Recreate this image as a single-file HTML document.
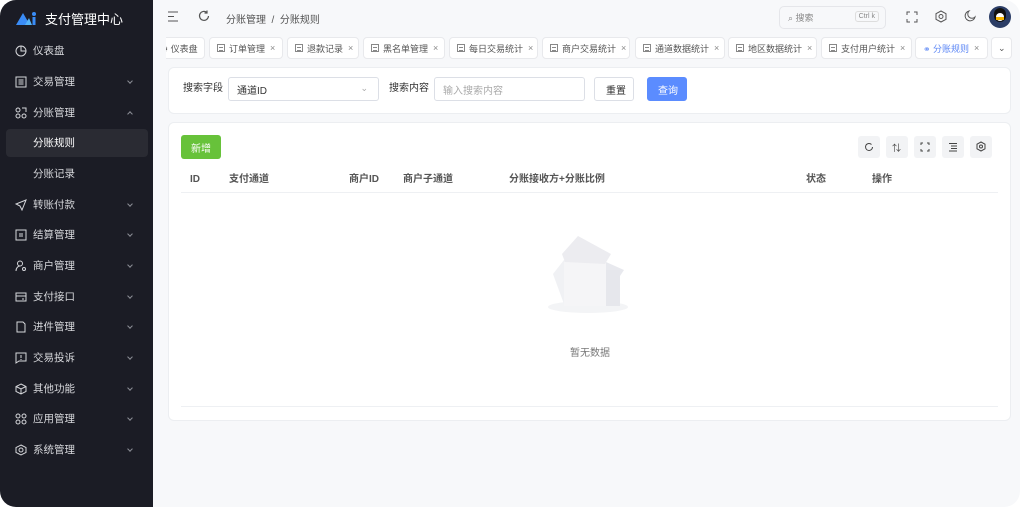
<!DOCTYPE html>
<html><head><meta charset="utf-8"><style>
*{margin:0;padding:0;box-sizing:border-box}
body{width:1024px;height:509px;background:#fff;font-family:"Liberation Sans","Noto Sans CJK SC",sans-serif;position:relative;overflow:hidden}
#frame{position:absolute;left:0;top:0;width:1020px;height:507px;border-radius:16px;overflow:hidden;background:#f7f8fa}
#side{position:absolute;left:0;top:0;width:153px;height:507px;background:#1b1c25}
.logo{position:absolute;left:16px;top:8px;height:20px;display:flex;align-items:center;color:#fff;font-size:13px}
.mi{position:absolute;left:0;width:153px;height:30px;display:flex;align-items:center;color:#d6d7db;font-size:10.5px;line-height:12px}
.mi svg{position:absolute;left:15px}
.mi span{position:absolute;left:33px;top:9px}
.mi .ar{position:absolute;left:128px;top:12px;width:4px;height:4px;border-right:1px solid #8b8d95;border-bottom:1px solid #8b8d95;transform:rotate(45deg)}
.mi .up{transform:rotate(-135deg);top:14px}
.act{background:#2a2b33;left:6px;width:142px;border-radius:4px}
.act span{left:27px;top:8px;color:#fff}
.top{position:absolute;left:153px;top:0;right:0;height:34px;color:#555;font-size:10px}
.tab{position:absolute;top:37px;height:22px;background:#fff;border:1px solid #e8e9ec;border-radius:4px;font-size:9px;color:#555;display:flex;align-items:center;padding-left:7px;white-space:nowrap}
.tab i{display:inline-block;width:8px;height:8px;border:1px solid #888;margin-right:4px;position:relative}
.tab i:after{content:"";position:absolute;left:1px;top:2px;width:4px;height:2px;border-top:1px solid #888;border-bottom:1px solid #888}
.tab b{font-weight:normal;color:#888;margin-left:5px}
.card{position:absolute;background:#fff;border:1px solid #eceef1;border-radius:6px}
.lbl{position:absolute;font-size:10px;color:#333;line-height:12px}
.inp{position:absolute;border:1px solid #dcdfe6;border-radius:3px;height:24px;font-size:10px;display:flex;align-items:center;padding-left:8px}
.tb{position:absolute;top:136px;width:22px;height:22px;background:#f2f3f5;border-radius:3px}
.th{position:absolute;top:174px;font-size:10px;line-height:12px;color:#555;font-weight:bold}
</style></head><body>
<div id="frame">
<div id="side">
 <div class="logo"><svg width="22" height="16" viewBox="0 0 22 16"><path d="M0 15L7 3l7 12z" fill="#3a8cf6"/><path d="M9 15l4-7 3 7z" fill="#56b4f7"/><circle cx="18" cy="4" r="2" fill="#3a8cf6"/><rect x="16.5" y="7" width="3" height="8" fill="#3a8cf6"/></svg><span style="margin-left:7px">支付管理中心</span></div>
 <div class="mi" style="top:36px"><svg width="12" height="12" viewBox="0 0 12 12" fill="none" stroke="#d6d7db"><circle cx="6" cy="6" r="5"/><path d="M6 1v5h5"/></svg><span>仪表盘</span></div>
 <div class="mi" style="top:67px"><svg width="12" height="12" viewBox="0 0 12 12" fill="none" stroke="#d6d7db"><rect x="1" y="1" width="10" height="10"/><path d="M3.5 4h5M3.5 6h5M3.5 8h5"/></svg><span>交易管理</span><i class="ar"></i></div>
 <div class="mi" style="top:98px"><svg width="12" height="12" viewBox="0 0 12 12" fill="none" stroke="#d6d7db"><circle cx="3" cy="3" r="2"/><circle cx="3" cy="9" r="2"/><circle cx="9" cy="9" r="2"/><path d="M7 1h4v4"/></svg><span>分账管理</span><i class="ar up"></i></div>
 <div class="mi act" style="top:129px;height:28px"><span>分账规则</span></div>
 <div class="mi" style="top:159px"><span>分账记录</span></div>
 <div class="mi" style="top:190px"><svg width="12" height="12" viewBox="0 0 12 12" fill="none" stroke="#d6d7db"><path d="M11 1L1 5l4 2 2 4z"/></svg><span>转账付款</span><i class="ar"></i></div>
 <div class="mi" style="top:220px"><svg width="12" height="12" viewBox="0 0 12 12" fill="none" stroke="#d6d7db"><rect x="1" y="1" width="10" height="10"/><path d="M4 5h4M4 7h4"/></svg><span>结算管理</span><i class="ar"></i></div>
 <div class="mi" style="top:251px"><svg width="12" height="12" viewBox="0 0 12 12" fill="none" stroke="#d6d7db"><circle cx="5" cy="3.5" r="2.5"/><path d="M1 11c0-3 2-5 4-5"/><circle cx="9" cy="9" r="1.5"/></svg><span>商户管理</span><i class="ar"></i></div>
 <div class="mi" style="top:282px"><svg width="12" height="12" viewBox="0 0 12 12" fill="none" stroke="#d6d7db"><rect x="1" y="2" width="10" height="8"/><path d="M1 5h10M7 8h2"/></svg><span>支付接口</span><i class="ar"></i></div>
 <div class="mi" style="top:312px"><svg width="12" height="12" viewBox="0 0 12 12" fill="none" stroke="#d6d7db"><path d="M2 1h6l2 2v8H2z"/></svg><span>进件管理</span><i class="ar"></i></div>
 <div class="mi" style="top:343px"><svg width="12" height="12" viewBox="0 0 12 12" fill="none" stroke="#d6d7db"><path d="M1 1h10v8H4l-3 2z"/><path d="M6 3v3M6 7v1"/></svg><span>交易投诉</span><i class="ar"></i></div>
 <div class="mi" style="top:374px"><svg width="12" height="12" viewBox="0 0 12 12" fill="none" stroke="#d6d7db"><path d="M6 1l5 2.5v5L6 11 1 8.5v-5z"/><path d="M1 3.5L6 6l5-2.5M6 6v5"/></svg><span>其他功能</span><i class="ar"></i></div>
 <div class="mi" style="top:404px"><svg width="12" height="12" viewBox="0 0 12 12" fill="none" stroke="#d6d7db"><circle cx="3" cy="3" r="2"/><circle cx="9" cy="3" r="2"/><circle cx="3" cy="9" r="2"/><circle cx="9" cy="9" r="2"/></svg><span>应用管理</span><i class="ar"></i></div>
 <div class="mi" style="top:435px"><svg width="12" height="12" viewBox="0 0 12 12" fill="none" stroke="#d6d7db"><path d="M6 1l5 2.5v5L6 11 1 8.5v-5z"/><circle cx="6" cy="6" r="2"/></svg><span>系统管理</span><i class="ar"></i></div>
</div>
<div class="top">
 <svg style="position:absolute;left:14px;top:11px" width="12" height="11" viewBox="0 0 12 11" fill="none" stroke="#555"><path d="M1 1h10M1 5.5h6M1 10h10"/></svg>
 <svg style="position:absolute;left:45px;top:10px" width="12" height="12" viewBox="0 0 12 12" fill="none" stroke="#555" stroke-width="1.2"><path d="M10.5 6A4.5 4.5 0 1 1 9 2.5M9 0.5v2.5H6.5"/></svg>
 <span style="position:absolute;left:73px;top:11px">分账管理 &nbsp;/&nbsp; 分账规则</span>
 <div style="position:absolute;left:626px;top:6px;width:107px;height:23px;border:1px solid #e5e6ea;border-radius:5px;background:#f7f8fa;font-size:9px;color:#888;display:flex;align-items:center;padding-left:8px">⌕ 搜索<span style="position:absolute;right:6px;top:4px;border:1px solid #ddd;border-radius:3px;font-size:7px;padding:1px 3px">Ctrl k</span></div>
 <svg style="position:absolute;left:753px;top:11px" width="12" height="12" viewBox="0 0 12 12" fill="none" stroke="#555"><path d="M1 4V1h3M8 1h3v3M11 8v3H8M4 11H1V8"/></svg>
 <svg style="position:absolute;left:782px;top:10px" width="12" height="13" viewBox="0 0 12 13" fill="none" stroke="#555"><path d="M6 1l5 2.7v5.6L6 12 1 9.3V3.7z"/><circle cx="6" cy="6.5" r="2"/></svg>
 <svg style="position:absolute;left:811px;top:10px" width="12" height="12" viewBox="0 0 12 12" fill="none" stroke="#555"><path d="M5 1a5 5 0 1 0 6 6A4 4 0 0 1 5 1z"/></svg>
 <div style="position:absolute;left:836px;top:6px;width:22px;height:22px;border-radius:50%;background:#2b3d66;overflow:hidden"><div style="position:absolute;left:5px;top:2px;width:12px;height:14px;background:#111;border-radius:6px"></div><div style="position:absolute;left:7px;top:7px;width:8px;height:8px;background:#fff;border-radius:4px"></div><div style="position:absolute;left:7px;top:11px;width:8px;height:3px;background:#f5b400"></div></div>
</div>
<div style="position:absolute;left:166px;top:37px;width:40px;height:22px;overflow:hidden"><div class="tab" style="left:-14px;top:0;width:53px">⚙ 仪表盘</div></div>
<div class="tab" style="left:209px;width:74px"><i></i>订单管理<b>×</b></div>
<div class="tab" style="left:287px;width:72px"><i></i>退款记录<b>×</b></div>
<div class="tab" style="left:363px;width:82px"><i></i>黑名单管理<b>×</b></div>
<div class="tab" style="left:449px;width:89px"><i></i>每日交易统计<b>×</b></div>
<div class="tab" style="left:542px;width:88px"><i></i>商户交易统计<b>×</b></div>
<div class="tab" style="left:635px;width:90px"><i></i>通道数据统计<b>×</b></div>
<div class="tab" style="left:728px;width:89px"><i></i>地区数据统计<b>×</b></div>
<div class="tab" style="left:821px;width:91px"><i></i>支付用户统计<b>×</b></div>
<div class="tab" style="left:915px;width:73px;color:#5b86f5">⚭ 分账规则<b>×</b></div>
<div class="tab" style="left:991px;width:21px;padding-left:6px;color:#555">⌄</div>
<div class="card" style="left:168px;top:67px;width:843px;height:47px"></div>
<div class="lbl" style="left:183px;top:83px">搜索字段</div>
<div class="inp" style="left:228px;top:77px;width:151px;color:#333">通道ID<span style="position:absolute;right:10px;top:5px;color:#aaa;font-size:9px">⌄</span></div>
<div class="lbl" style="left:389px;top:83px">搜索内容</div>
<div class="inp" style="left:434px;top:77px;width:151px;color:#aaa">输入搜索内容</div>
<div class="inp" style="left:594px;top:77px;width:40px;color:#333;padding-left:11px">重置</div>
<div class="inp" style="left:647px;top:77px;width:40px;background:#5b8cff;border-color:#5b8cff;color:#fff;padding-left:10px">查询</div>
<div class="card" style="left:168px;top:122px;width:843px;height:299px"></div>
<div style="position:absolute;left:181px;top:135px;width:40px;height:24px;background:#67c23a;border-radius:3px;color:#fff;font-size:10px;display:flex;align-items:center;justify-content:center">新增</div>
<div class="tb" style="left:858px"></div><div class="tb" style="left:886px"></div><div class="tb" style="left:914px"></div><div class="tb" style="left:942px"></div><div class="tb" style="left:970px"></div>
<svg style="position:absolute;left:864px;top:142px" width="10" height="10" viewBox="0 0 10 10" fill="none" stroke="#444"><path d="M8.5 5A3.5 3.5 0 1 1 7.5 2.5"/></svg>
<span style="position:absolute;left:892px;top:141px;font-size:9px;color:#444">⇅</span>
<svg style="position:absolute;left:920px;top:142px" width="10" height="10" viewBox="0 0 10 10" fill="none" stroke="#444"><path d="M1 3V1h2M7 1h2v2M9 7v2H7M3 9H1V7"/></svg>
<svg style="position:absolute;left:948px;top:142px" width="10" height="10" viewBox="0 0 10 10" fill="none" stroke="#444"><path d="M1 1.5h8M3 4h6M3 6.5h6M1 9h8"/></svg>
<svg style="position:absolute;left:976px;top:141px" width="10" height="11" viewBox="0 0 10 11" fill="none" stroke="#444"><path d="M5 1l4 2.2v4.6L5 10 1 7.8V3.2z"/><circle cx="5" cy="5.5" r="1.5"/></svg>
<div class="th" style="left:190px">ID</div>
<div class="th" style="left:229px">支付通道</div>
<div class="th" style="left:349px">商户ID</div>
<div class="th" style="left:403px">商户子通道</div>
<div class="th" style="left:509px">分账接收方+分账比例</div>
<div class="th" style="left:806px">状态</div>
<div class="th" style="left:872px">操作</div>
<div style="position:absolute;left:181px;top:192px;width:817px;height:1px;background:#eef0f3"></div>
<div style="position:absolute;left:181px;top:406px;width:817px;height:1px;background:#eef0f3"></div>
<svg style="position:absolute;left:545px;top:234px" width="86" height="82" viewBox="0 0 86 82"><ellipse cx="43" cy="73" rx="40" ry="6" fill="#f3f4f6"/><path d="M8 40l11-14 25 14 0 30-25 0z" fill="#f0f1f4"/><path d="M19 28h42v44H19z" fill="#f5f5f7"/><path d="M61 28l18 8-4 6-14 0z" fill="#e8e9ee"/><path d="M61 36h14v36H61z" fill="#e6e7ec"/><path d="M17 20L33 2l33 18-6 10L20 28z" fill="#ececf0"/></svg>
<div style="position:absolute;left:570px;top:344px;font-size:10px;color:#777">暂无数据</div>
</div>
</body></html>
